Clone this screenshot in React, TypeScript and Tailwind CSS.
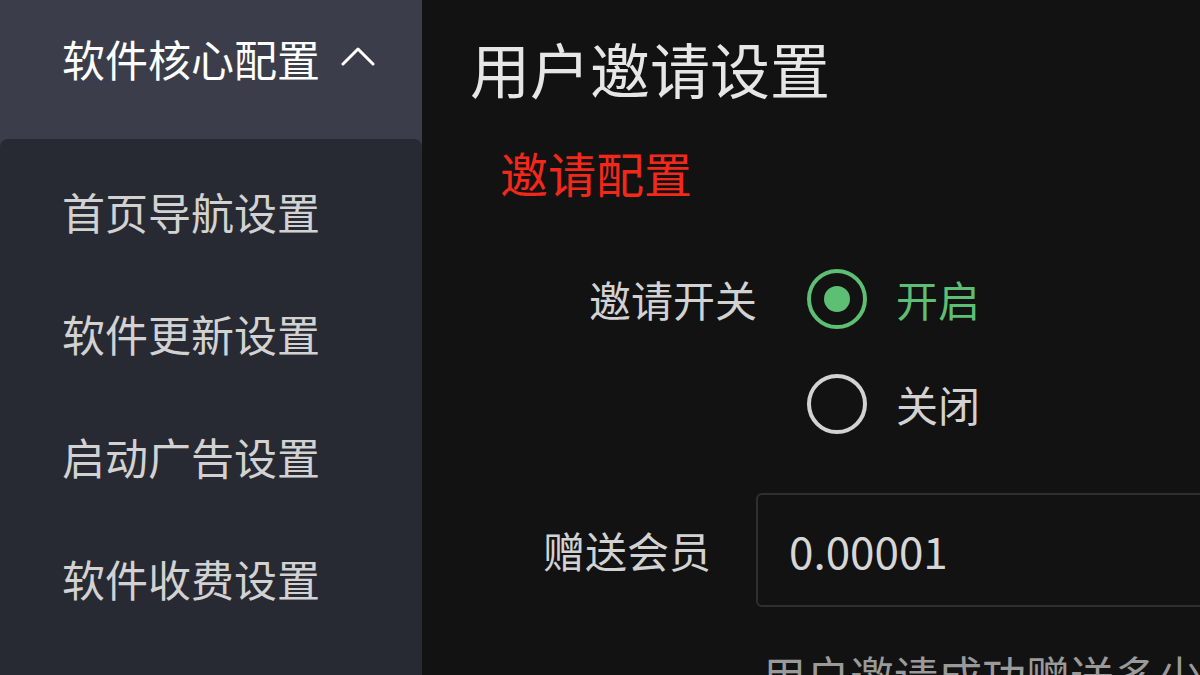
import React from "react";

const font = { fontFamily: '"Noto Sans CJK SC", "Noto Sans", sans-serif' };

function Radio({ checked, label }: { checked: boolean; label: string }) {
  return (
    <div className="flex items-center h-[60px]">
      <div
        className={
          checked
            ? "w-[60px] h-[60px] rounded-full border-[4px] border-[#5cbf74] flex items-center justify-center"
            : "w-[60px] h-[60px] rounded-full border-[4px] border-[#d2d2d2] flex items-center justify-center"
        }
      >
        {checked && <div className="w-[26px] h-[26px] rounded-full bg-[#5cbf74]" />}
      </div>
      <span
        className={
          checked
            ? "ml-[29px] text-[42px] leading-none text-[#5cbf74]"
            : "ml-[29px] text-[42px] leading-none text-[#d2d2d2]"
        }
      >
        {label}
      </span>
    </div>
  );
}

export default function App() {
  const items = ["首页导航设置", "软件更新设置", "启动广告设置", "软件收费设置"];
  return (
    <div className="w-[1200px] h-[675px] overflow-hidden flex bg-[#121212]" style={font}>
      <aside className="w-[422px] h-full bg-[#3b3e4a] flex flex-col shrink-0">
        <div className="h-[139px] flex items-center pl-[62px] pb-[23px] shrink-0">
          <span className="text-[43px] leading-none text-white">软件核心配置</span>
          <svg className="ml-[21px] mt-[-4px]" width="34" height="22" viewBox="0 0 34 22" fill="none">
            <polyline points="2,19 17,4 32,19" stroke="#ffffff" strokeWidth="3" strokeLinecap="round" strokeLinejoin="round" />
          </svg>
        </div>
        <div className="flex-1 bg-[#282a33] rounded-t-[8px] pt-[11px]">
          {items.map((t) => (
            <div key={t} className="h-[122.5px] flex items-center pl-[62px]">
              <span className="text-[43px] leading-none text-[#d2d2d2]">{t}</span>
            </div>
          ))}
        </div>
      </aside>
      <main className="flex-1 flex flex-col pl-[48px] pt-[38px] min-w-0">
        <h1 className="text-[60px] leading-none h-[60px] text-[#e6e6e6] font-normal">用户邀请设置</h1>
        <div className="mt-[50px] ml-[30px] text-[48px] leading-none h-[48px] text-[#f2281a]">邀请配置</div>
        <div className="mt-[73px] ml-[119px] flex">
          <div className="text-[42px] leading-none h-[60px] flex items-center text-[#d2d2d2]">邀请开关</div>
          <div className="ml-[50px] flex flex-col gap-[45px]">
            <Radio checked label="开启" />
            <Radio checked={false} label="关闭" />
          </div>
        </div>
        <div className="mt-[59px] ml-[73px] flex items-center">
          <div className="text-[42px] leading-none text-[#d2d2d2]">赠送会员</div>
          <div className="ml-[45px] flex-1 h-[114px] border-[2px] border-[#2f2f2f] rounded-[6px] mr-[-20px] flex items-center pl-[31px]">
            <span className="text-[44px] leading-none text-[#d6d6d6]">0.00001</span>
          </div>
        </div>
        <div className="mt-[46px] ml-[292px] text-[44px] leading-none whitespace-nowrap text-[#9a9a9a]">
          用户邀请成功赠送多少天会员
        </div>
      </main>
    </div>
  );
}
